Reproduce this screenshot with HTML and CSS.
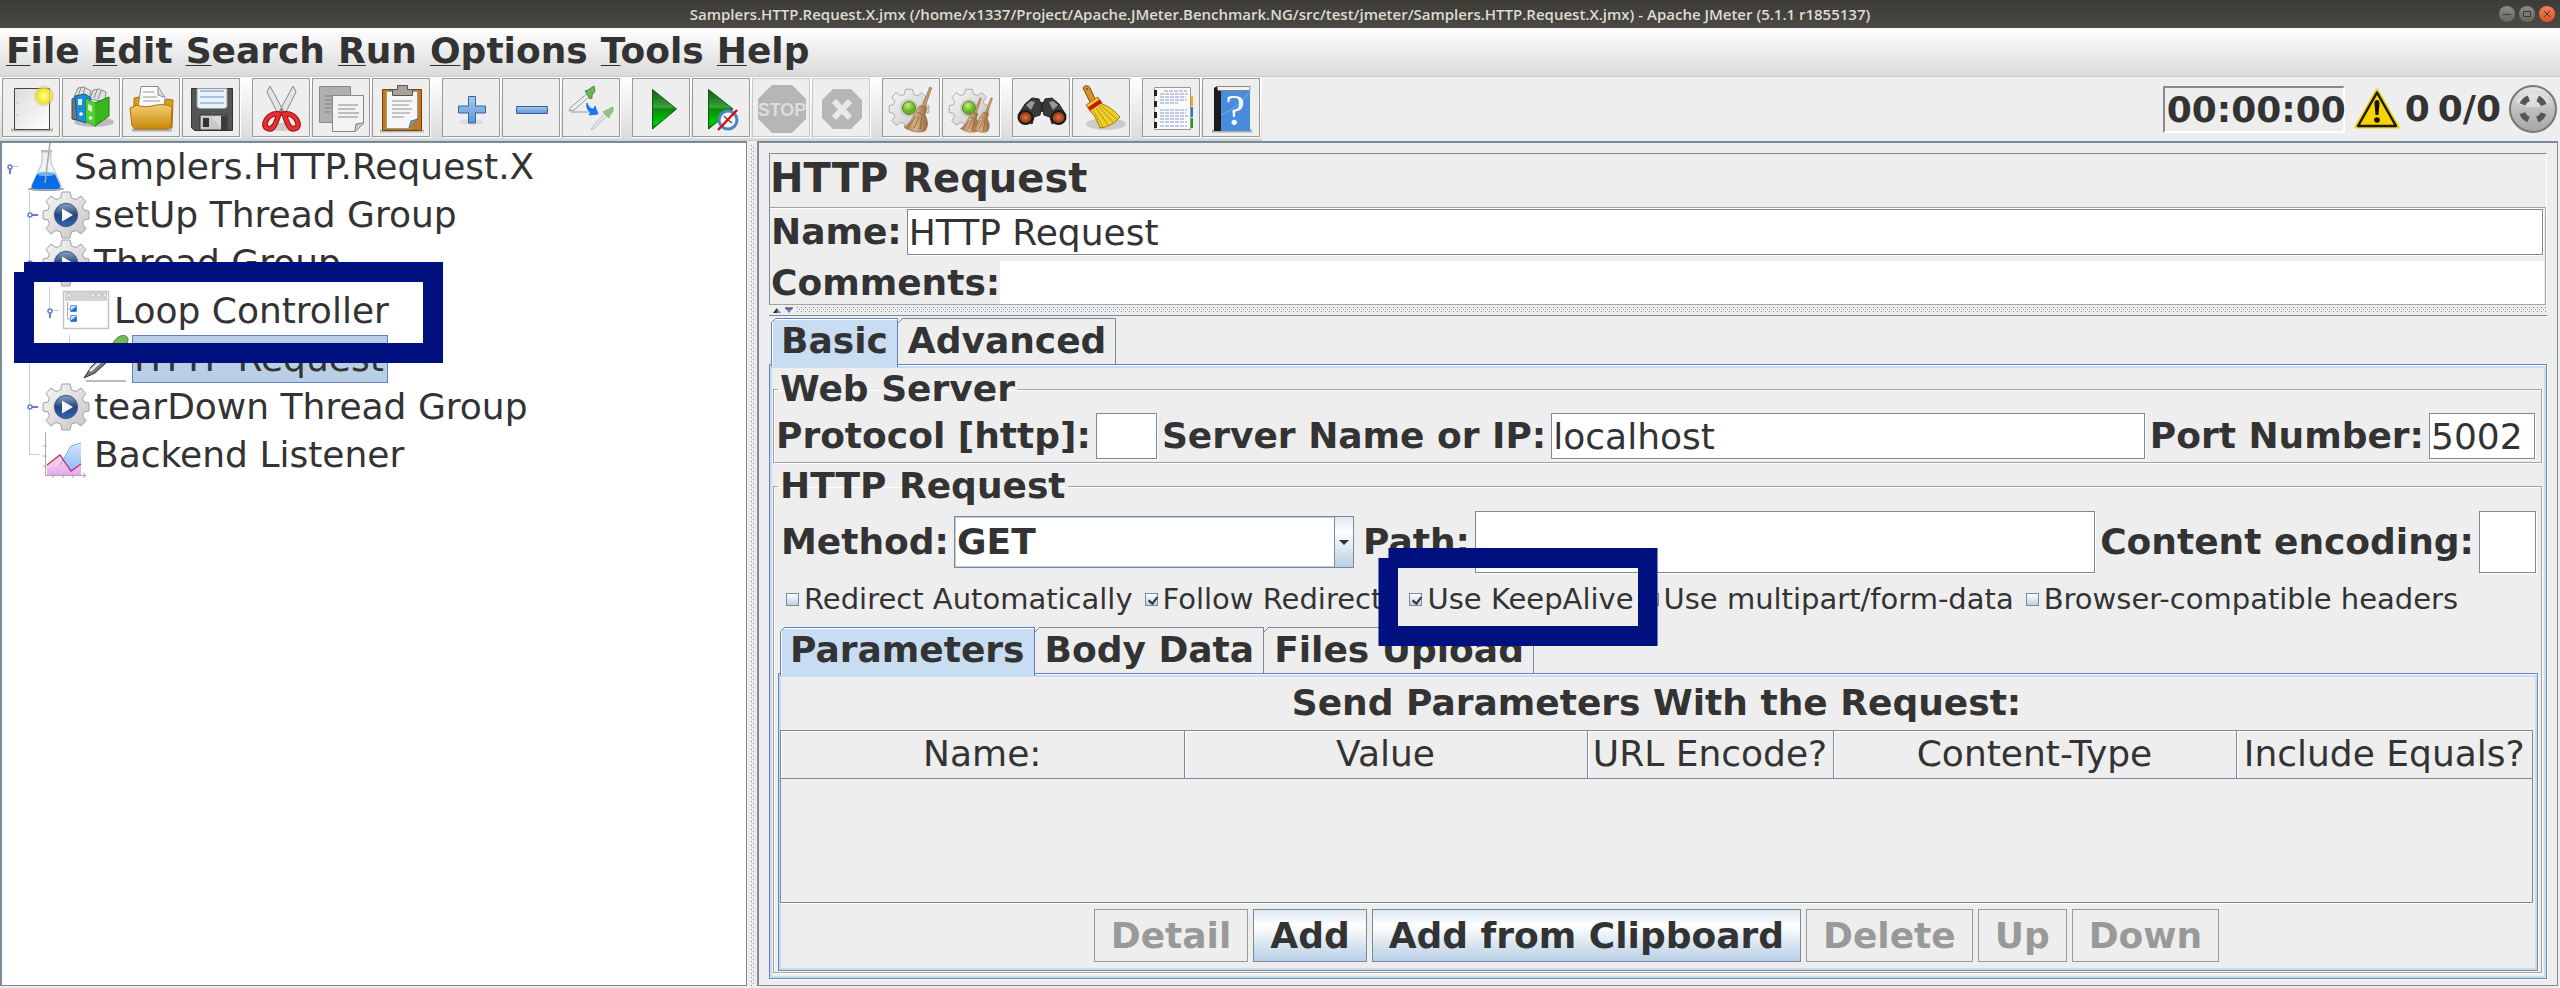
FILE: index.html
```html
<!DOCTYPE html>
<html lang="en">
<head>
<meta charset="utf-8">
<title>Samplers.HTTP.Request.X.jmx - Apache JMeter</title>
<link rel="stylesheet" href="styles.css">
</head>
<body>
<svg class="defs" aria-hidden="true">
  <defs>
    <linearGradient id="g-metal" x1="0" y1="0" x2="1" y2="1"><stop offset="0" stop-color="#f8f8f8"/><stop offset="1" stop-color="#c4c4c4"/></linearGradient>
    <linearGradient id="g-paper" x1="0" y1="0" x2="1" y2="1"><stop offset="0" stop-color="#dcdcdc"/><stop offset="1" stop-color="#ffffff"/></linearGradient>
    <radialGradient id="g-glow"><stop offset="0" stop-color="#ffffd0"/><stop offset=".35" stop-color="#fff23a"/><stop offset=".7" stop-color="#e8dc30" stop-opacity=".8"/><stop offset="1" stop-color="#a8a040" stop-opacity="0"/></radialGradient>
    <linearGradient id="g-folder" x1="0" y1="0" x2="0" y2="1"><stop offset="0" stop-color="#f2cd72"/><stop offset="1" stop-color="#c98a08"/></linearGradient>
    <linearGradient id="g-green" x1="0" y1="0" x2="0" y2="1"><stop offset="0" stop-color="#0d5c12"/><stop offset=".45" stop-color="#3ba03c"/><stop offset=".5" stop-color="#0a8a0c"/><stop offset=".85" stop-color="#00c800"/><stop offset="1" stop-color="#067a08"/></linearGradient>
    <linearGradient id="g-blue" x1="0" y1="0" x2="0" y2="1"><stop offset="0" stop-color="#a9c8ea"/><stop offset="1" stop-color="#5e94d2"/></linearGradient>
    <linearGradient id="g-play" x1="0" y1="0" x2="0" y2="1"><stop offset="0" stop-color="#8ea4c8"/><stop offset=".5" stop-color="#27457c"/><stop offset="1" stop-color="#2f66b8"/></linearGradient>
    <radialGradient id="g-led" cx=".4" cy=".3"><stop offset="0" stop-color="#c4f07a"/><stop offset="1" stop-color="#5eb41a"/></radialGradient>
    <radialGradient id="g-lens"><stop offset="0" stop-color="#e8703a"/><stop offset="1" stop-color="#7a2c10"/></radialGradient>
    <linearGradient id="g-broom" x1="0" y1="0" x2="1" y2="0"><stop offset="0" stop-color="#a97c50"/><stop offset=".5" stop-color="#d9b088"/><stop offset="1" stop-color="#94683c"/></linearGradient>
    <linearGradient id="g-knob" x1="0" y1="0" x2="0" y2="1"><stop offset="0" stop-color="#e8e8e8"/><stop offset=".5" stop-color="#c0c0c0"/><stop offset="1" stop-color="#a4a4a4"/></linearGradient>
    <linearGradient id="g-sky" x1="0" y1="0" x2="0" y2="1"><stop offset="0" stop-color="#d2e4fc"/><stop offset="1" stop-color="#80b4f8"/></linearGradient>
    <linearGradient id="g-rose" x1="0" y1="0" x2="0" y2="1"><stop offset="0" stop-color="#fbd8d8"/><stop offset="1" stop-color="#f0a8f4"/></linearGradient>
    <path id="gear-shape" d="M-4-23H4L5.500-17 10-15.500 15-19 20-13.500 16.500-9 18-5 23-4V4L18 5 16.500 9 20 13.500 15 19 10 15.500 5.500 17 4 23H-4L-5.500 17-10 15.500-15 19-20 13.500-16.500 9-18 5-23 4V-4L-18-5-16.500-9-20-13.500-15-19-10-15.500-5.500-17Z" fill="url(#g-metal)" stroke="#a2a2a2"/>
    <symbol id="gear-play" viewBox="0 0 48 48"><g transform="translate(24 24)"><use href="#gear-shape"/><circle r="12.500" fill="#c4c8d0"/><circle r="11.500" fill="url(#g-play)" stroke="#3c5078"/><path d="M-4-6.500L7 0-4 6.500Z" fill="#f4f6fa"/></g></symbol>
    <symbol id="broom" viewBox="0 0 30 48"><path d="M27 1l2 1-7 20-3-1Z" fill="#c89a6c" stroke="#8c6236" stroke-width=".6"/><path d="M17 20l7 2-2 7c3 6 4 12 0 17-5 2-14 1-21-4 5-3 9-9 11-15Z" fill="url(#g-broom)" stroke="#8c6236" stroke-width=".7"/><path d="M14 27l8 3M13 31L5 42M16 31l-5 12M19 31l-2 14" stroke="#7c5530" fill="none" stroke-width=".8"/></symbol>
    <symbol id="h-closed" viewBox="0 0 20 48"><path d="M8 24h8" stroke="#6382bf" stroke-width="2"/><circle cx="8" cy="24" r="2" fill="#fff" stroke="#6382bf" stroke-width="1.500"/></symbol>
    <symbol id="h-open" viewBox="0 0 20 48"><path d="M8 23.500h9" stroke="#b8cfe5"/><path d="M8 24v7" stroke="#6382bf" stroke-width="2"/><circle cx="8" cy="24" r="2" fill="#fff" stroke="#6382bf" stroke-width="1.500"/></symbol>
  </defs>
</svg>

<header class="titlebar">
  <h1 class="titlebar-text">Samplers.HTTP.Request.X.jmx (/home/x1337/Project/Apache.JMeter.Benchmark.NG/src/test/jmeter/Samplers.HTTP.Request.X.jmx) - Apache JMeter (5.1.1 r1855137)</h1>
  <div class="window-buttons">
    <button class="win" aria-label="Minimize"><svg viewBox="0 0 16 16"><path d="M4 8.500h8"/></svg></button>
    <button class="win" aria-label="Maximize"><svg viewBox="0 0 16 16"><path d="M4.500 5.500h7v5h-7Z"/></svg></button>
    <button class="win win-close" aria-label="Close"><svg viewBox="0 0 16 16"><path d="M5 5l6 6M11 5l-6 6"/></svg></button>
  </div>
</header>

<nav class="menubar">
  <button class="menu"><u>F</u>ile</button>
  <button class="menu"><u>E</u>dit</button>
  <button class="menu"><u>S</u>earch</button>
  <button class="menu"><u>R</u>un</button>
  <button class="menu"><u>O</u>ptions</button>
  <button class="menu"><u>T</u>ools</button>
  <button class="menu"><u>H</u>elp</button>
</nav>

<div class="toolbar">
  <div class="tools">
    <div class="tool-group">
      <button class="tool" aria-label="New"><svg viewBox="1 1 56 56"><path d="M9 51h42" stroke="#b8b8b8" stroke-width="3"/><path d="M12.500 9.500h35v41h-35Z" fill="url(#g-paper)" stroke="#444"/><path d="M15 24h1M15 36h1" stroke="#888"/><ellipse cx="42" cy="17" rx="10.500" ry="11" fill="url(#g-glow)"/></svg></button>
      <button class="tool" aria-label="Templates"><svg viewBox="1 1 56 56"><ellipse cx="32" cy="43" rx="20" ry="5" fill="#999" opacity=".6"/><path d="M10 20l10-5v27l-10-2Z" fill="#73777c" stroke="#44484c"/><path d="M12 18l4-9 6-1 7 4-4 14ZM28 20l3-9 6-1 7 3-1 10Z" fill="#e0e0e0" stroke="#888"/><path d="M16 17l3-8M20 18l3-9M32 19l3-8M36 20l3-8" stroke="#888"/><path d="M13 17l10-2 6 4-5 25-9-3Z" fill="#1c8cd8" stroke="#0b5c96"/><path d="M24 20l9 4 14-6v19l-14 10-9-5Z" fill="#38b81c" stroke="#1f7a0e"/><path d="M24 20l9 4v23l-9-5Z" fill="#4cd42c"/><path d="M26 25l4 2v6l-4-2ZM16 20l4 0v6h-4Z" fill="#e4f4dc"/><circle cx="28.500" cy="39" r="1.800" fill="#fff"/><circle cx="19" cy="35" r="1.800" fill="#fff"/></svg></button>
      <button class="tool" aria-label="Open"><svg viewBox="1 1 56 56"><path d="M10 51h40" stroke="#888" stroke-width="3" opacity=".6"/><path d="M12 19l5-1 2 4h24l2-2 6 1-1 28H12Z" fill="#dc9c14" stroke="#a8720a"/><path d="M19 7.500h17l7 11-1 13-26-2Z" fill="#fafafa" stroke="#8a8a8a"/><path d="M36 8v8l6 2" fill="#ddd" stroke="#8a8a8a"/><path d="M21 13h11M21 18h14M21 22h17" stroke="#999"/><path d="M8 29l7-3c5 2 10 2 15 1 7-2 14-2 20 1l-1 19-3 3H13l-3-3Z" fill="url(#g-folder)" stroke="#a8720a"/></svg></button>
      <button class="tool" aria-label="Save"><svg viewBox="1 1 56 56"><path d="M9.500 9.500h41v42h-38l-3-3Z" fill="#555" stroke="#333"/><path d="M15 9.500h30v18l-2 2H17l-2-2Z" fill="#eaf2fc" stroke="#999"/><path d="M18 12h24M18 18h24M18 24h24" stroke="#8fb0d8" stroke-width="1.500"/><path d="M18 36h27v15H18Z" fill="#c8c8c8" stroke="#333"/><path d="M21 39h6v9h-6Z" fill="#333"/><path d="M39 36.500h6V51h-6Z" fill="#3c3c3c"/><path d="M29 38l10 10V37Z" fill="#e0e0e0" opacity=".7"/></svg></button>
    </div>
    <div class="tool-group">
      <button class="tool" aria-label="Cut"><svg viewBox="1 1 56 56"><ellipse cx="30" cy="48" rx="16" ry="4" fill="#ccc"/><path d="M18 7l-3 6 12 24 5-4ZM41 7l3 6-12 24-5-4Z" fill="#e4e4e4" stroke="#888"/><circle cx="29.500" cy="31" r="1.500" fill="#888"/><path d="M27 35c-6-1-12 2-14 9-1 6 6 8 9 3 3-4 3-8 5-12ZM32 35c6-1 12 2 14 9 1 6-6 8-9 3-3-4-3-8-5-12Z" fill="none" stroke="#9c0c0c" stroke-width="5.500"/><path d="M27 35c-6-1-12 2-14 9-1 6 6 8 9 3 3-4 3-8 5-12ZM32 35c6-1 12 2 14 9 1 6-6 8-9 3-3-4-3-8-5-12Z" fill="none" stroke="#e43030" stroke-width="3.500"/></svg></button>
      <button class="tool" aria-label="Copy"><svg viewBox="1 1 56 56"><path d="M7.500 7.500h31v36h-31Z" fill="#b0b0b0" stroke="#8a8a8a"/><path d="M13 17h8M13 21h7M13 25h7M13 29h7M13 33h5" stroke="#8e8e8e" stroke-width="1.500"/><path d="M20.500 16.500h31v28l-8 8h-23Z" fill="#f4f4f4" stroke="#888"/><path d="M43 52l1-7 7-1" fill="#ccc" stroke="#777"/><path d="M26 26h20M26 30h17M26 34h21M26 38h20" stroke="#aaa" stroke-width="1.500"/></svg></button>
      <button class="tool" aria-label="Paste"><svg viewBox="1 1 56 56"><path d="M8 52h44" stroke="#bbb" stroke-width="3"/><path d="M10.500 10.500h39v41h-39Z" fill="#c07a1c" stroke="#6e430a"/><path d="M14.500 12.500h31v29l-8 8h-23Z" fill="#f6f6f6" stroke="#999"/><path d="M37 49l2-7 7-2Z" fill="#999" stroke="#666"/><path d="M20 22h20M20 26h17M20 30h20M20 34h18M20 38h12" stroke="#b4b4b4" stroke-width="1.500"/><path d="M20.500 10.500h5V6.500h10v4h5v6h-20Z" fill="#a4a49c" stroke="#55554e"/></svg></button>
    </div>
    <div class="tool-group">
      <button class="tool" aria-label="Expand All"><svg viewBox="1 1 56 56"><ellipse cx="29" cy="43" rx="12" ry="3" fill="#ddd"/><path d="M26.500 17.500h7v9.500h10v7h-10v10h-7v-10h-10v-7h10Z" fill="url(#g-blue)" stroke="#3465a4"/></svg></button>
      <button class="tool" aria-label="Collapse All"><svg viewBox="1 1 56 56"><path d="M14.500 27.500h31v7h-31Z" fill="url(#g-blue)" stroke="#3465a4"/></svg></button>
      <button class="tool" aria-label="Toggle"><svg viewBox="1 1 56 56"><path d="M9 33h26" stroke="#999"/><path d="M26 14L9 28l-2 4 5-1 16-14Z" fill="#f0f0f0" stroke="#999"/><path d="M23 12l3-1 6-4 1 5-3 4 0 3-2 1Z" fill="#6eb456" stroke="#4a8a38"/><path d="M25 24c2 5 4 6 7 6l1-3 3 8-9 1 2-3c-3-1-5-4-4-9Z" fill="#1b74f0" stroke="#1b74f0"/><g opacity=".6"><path d="M43 34L30 48l-1 3 4-2 13-13Z" fill="#ddd" stroke="#aaa"/><path d="M41 33l4-2 6-3v4l-3 4-1 3Z" fill="#5aa646" stroke="#4a8a38"/></g></svg></button>
    </div>
    <div class="tool-group">
      <button class="tool" aria-label="Start"><svg viewBox="1 1 56 56"><path d="M20.500 10.500L44.500 30 20.500 50Z" fill="url(#g-green)" stroke="#0c5a10"/></svg></button>
      <button class="tool" aria-label="Start no pauses"><svg viewBox="1 1 56 56"><path d="M16.500 10.500L41 30 16.500 50Z" fill="url(#g-green)" stroke="#0c5a10"/><circle cx="36" cy="41" r="9" fill="#f2f6fc" stroke="#4c84c4" stroke-width="3"/><path d="M36 41l-4-4M36 41l4 3" stroke="#555" stroke-width="1.500"/><path d="M26 51L45 31" stroke="#d40c18" stroke-width="2.500"/></svg></button>
      <button class="tool" disabled aria-label="Stop"><svg viewBox="1 1 56 56"><path d="M20 6h20l14 14v20L40 54H20L6 40V20Z" fill="#b6b6b6"/><text x="30" y="37" class="stop-text">STOP</text></svg></button>
      <button class="tool" disabled aria-label="Shutdown"><svg viewBox="1 1 56 56"><path d="M21 10h18l11 11v18L39 50H21L10 39V21Z" fill="#b6b6b6"/><path d="M22 22l16 17M38 22L22 39" stroke="#e8e8e8" stroke-width="6"/></svg></button>
    </div>
    <div class="tool-group">
      <button class="tool" aria-label="Clear"><svg viewBox="1 1 56 56"><use href="#gear-shape" transform="translate(27 30) scale(.86)"/><circle cx="27" cy="29" r="9" fill="#c8c8c8"/><circle cx="27" cy="29" r="6.500" fill="url(#g-led)" stroke="#5a8a30"/><use href="#broom" x="21" y="7" width="30" height="47"/></svg></button>
      <button class="tool" aria-label="Clear All"><svg viewBox="1 1 56 56"><use href="#gear-shape" transform="translate(27 30) scale(.86)"/><circle cx="27" cy="29" r="9" fill="#c8c8c8"/><circle cx="27" cy="29" r="6.500" fill="url(#g-led)" stroke="#5a8a30"/><use href="#broom" x="17" y="18" width="24" height="36"/><use href="#broom" x="28" y="18" width="24" height="36"/></svg></button>
    </div>
    <div class="tool-group">
      <button class="tool" aria-label="Search"><svg viewBox="1 1 56 56"><path d="M25 23h11v10H25Z" fill="#444"/><path d="M6 36L13 25l7-6 7 1 3 7-2 9-6 2-2 7ZM54 36l-7-11-7-6-7 1-3 7 2 9 6 2 2 7Z" fill="#3a3a3c" stroke="#222"/><path d="M14 26l5-4 4 1-4 8ZM46 26l-5-4-4 1 4 8Z" fill="#9a9a9e"/><ellipse cx="13.500" cy="38.500" rx="7" ry="6.500" fill="url(#g-lens)" stroke="#1a1a1a" stroke-width="2"/><ellipse cx="46.500" cy="38.500" rx="7" ry="6.500" fill="url(#g-lens)" stroke="#1a1a1a" stroke-width="2"/></svg></button>
      <button class="tool" aria-label="Reset Search"><svg viewBox="1 1 56 56"><ellipse cx="34" cy="45" rx="20" ry="6" fill="#ccc"/><path d="M11 9c1-3 6-3 7 0l6 13-5 3Z" fill="#d8922c" stroke="#7c4a08"/><circle cx="15" cy="10" r="1" fill="#7c4a08"/><path d="M14 26l12-8 2 6c8 3 14 7 20 14-5 6-12 10-20 11-3-7-5-13-10-17Z" fill="#f0d028" stroke="#9a7a08"/><path d="M21 31l10 17M24 29l12 17M26 27l15 16M28 26l17 14" stroke="#b89410" fill="none"/><path d="M17 30l12-8" stroke="#c81818" stroke-width="4"/></svg></button>
    </div>
    <div class="tool-group">
      <button class="tool" aria-label="Function Helper"><svg viewBox="1 1 56 56"><path d="M47 17h4v10h-4Z" fill="#f0b010"/><path d="M47 28h4v10h-4Z" fill="#2878d8"/><path d="M47 39h4v10h-4Z" fill="#18a018"/><path d="M12.500 8.500h36v42h-36Z" fill="#fbfbfb" stroke="#999"/><path d="M22 12h23M18 15h28M18 18h26M18 21h27M18 24h18M18 31h27M18 34h26M18 37h28M18 40h25M18 43h27M18 47h27" stroke="#8498c8" stroke-dasharray="4 1"/><path d="M12 14h3M12 25h3M12 36h3M12 46h3" stroke="#222" stroke-width="6"/></svg></button>
      <button class="tool" aria-label="Help"><svg viewBox="1 1 56 56"><path d="M10 52h40" stroke="#aaa" stroke-width="3"/><path d="M12 9l3-2h33v43l-3 2H12Z" fill="#1c1c1e"/><path d="M19 11h29v41H19Z" fill="#4a8cdc"/><path d="M15 7.500h33v4H16Z" fill="#f2f2f2" stroke="#888"/><path d="M19 36c10-4 20-12 28-22" stroke="#7cb0ec" fill="none"/><text x="33" y="46" class="help-text">?</text></svg></button>
    </div>
  </div>
  <div class="status">
    <output class="timer">00:00:00</output>
    <button class="warn" aria-label="Log errors"><svg viewBox="0 0 46 42"><path d="M23 2L44 39H2Z" fill="#fad200" stroke="#f0d400" stroke-width="3" stroke-linejoin="round"/><path d="M23 4.500L42 38H4Z" fill="#fad200" stroke="#1c1a10" stroke-width="2.500" stroke-linejoin="round"/><path d="M20.500 15c0-4 5-4 5 0l-1 12h-3Z" fill="#111"/><circle cx="23" cy="32" r="2.800" fill="#111"/></svg></button>
    <span class="errors">0</span>
    <span class="threads">0/0</span>
    <svg class="knob" viewBox="0 0 48 48"><circle cx="24" cy="24" r="23" fill="url(#g-knob)" stroke="#777" stroke-width="2"/><path d="M7 17C12 6 36 6 41 17 34 24 14 24 7 17Z" fill="#eee" opacity=".5"/><circle cx="24" cy="24" r="11.500" fill="none" stroke="#555" stroke-width="6" stroke-dasharray="9 9.060" stroke-dashoffset="-4.500"/></svg>
  </div>
</div>

<main class="workspace">
  <aside class="tree-pane">
    <ul class="tree">
      <li>
        <div class="node"><svg class="handle"><use href="#h-open"/></svg><svg class="icon" viewBox="0 0 48 48"><ellipse cx="24" cy="46" rx="18" ry="2" fill="#999"/><path d="M20 9h9v11l10 22c1 3-2 4-4 4H13c-3 0-4-2-3-4l10-22Z" fill="#eef2f4" stroke="#b4bcc0"/><path d="M15 31h18l5 11c1 3-1 4-3 4H13c-3 0-4-2-3-4Z" fill="#0a6ce8"/><ellipse cx="24" cy="31" rx="9" ry="2" fill="#6eb0f8"/><path d="M28 0l-5 40" stroke="#a4a8ac" stroke-width="1.500"/><path d="M19 8h11" stroke="#b4bcc0" stroke-width="2"/></svg><span class="label">Samplers.HTTP.Request.X</span></div>
        <ul>
          <li><div class="node"><svg class="handle"><use href="#h-closed"/></svg><svg class="icon"><use href="#gear-play"/></svg><span class="label">setUp Thread Group</span></div></li>
          <li>
            <div class="node"><svg class="handle"><use href="#h-open"/></svg><svg class="icon"><use href="#gear-play"/></svg><span class="label">Thread Group</span></div>
            <ul>
              <li>
                <div class="node"><svg class="handle"><use href="#h-open"/></svg><svg class="icon" viewBox="0 0 48 48"><path d="M1.500 4.500h45v37h-45Z" fill="#fff" stroke="#c4c4c4" stroke-width="1.500"/><path d="M3 5h42v9H3Z" fill="#d4d4d4"/><path d="M5 7h4l-2 4ZM29 7h4l-2 4ZM35 7h4l-2 4ZM41 7h4l-2 4Z" fill="#fff" stroke="#aaa" stroke-width=".5"/><path d="M5.500 15v17h4M5.500 22h4" fill="none" stroke="#aaa"/><path d="M8.500 18.500h6v6h-6ZM8.500 28.500h6v6h-6Z" fill="#cfe4fc" stroke="#6a9ad8"/><path d="M9 24l5-4v4ZM9 34l5-4v4Z" fill="#1070e8" stroke="#1070e8"/></svg><span class="label">Loop Controller</span><span class="mark mark-tree"></span></div>
                <ul>
                  <li><div class="node"><svg class="handle"></svg><svg class="icon" viewBox="0 0 48 48"><path d="M4 46h40" stroke="#bbb" stroke-width="2"/><path d="M32 11L9 32 2 43l11-5 24-22Z" fill="#777" stroke="#333"/><path d="M8 36L32 14" stroke="#e4e4e4" stroke-width="3"/><path d="M31 8c4-8 12-9 14-6 3 3-1 10-7 14Z" fill="#74bc50" stroke="#4a8a38"/></svg><span class="label selected">HTTP Request</span></div></li>
                </ul>
              </li>
            </ul>
          </li>
          <li><div class="node"><svg class="handle"><use href="#h-closed"/></svg><svg class="icon"><use href="#gear-play"/></svg><span class="label">tearDown Thread Group</span></div></li>
          <li><div class="node"><svg class="handle"><path d="M8 23.500h10" stroke="#b8cfe5"/></svg><svg class="icon" viewBox="0 0 48 48"><path d="M5 38l13-4 11-18 10-3v31H5Z" fill="url(#g-sky)"/><path d="M5 34l13-10 11 16 10-7v11H5Z" fill="url(#g-rose)" opacity=".9"/><path d="M18 34l11-19 10-3" fill="none" stroke="#6ca4f0"/><path d="M5 34l13-10 11 16 10-7" fill="none" stroke="#b8307c" stroke-width="1.300"/><path d="M3.500 2v42.500H43M1 15h4M1 25h4M1 35h4M11 43v4M21 43v4M31 43v4M3.500 1v4M41 42l3 2.500-3 2" fill="none" stroke="#aaa"/></svg><span class="label">Backend Listener</span></div></li>
        </ul>
      </li>
    </ul>
  </aside>
  <div class="splitter splitter-v"></div>
  <section class="editor">
    <div class="head">
      <h2 class="head-title">HTTP Request</h2>
      <div class="head-fields">
        <div class="row name-row"><label for="name">Name:</label><input id="name" class="field grow" value="HTTP Request"></div>
        <div class="row comment-row"><label for="comments">Comments:</label><input id="comments" class="plain-field grow"></div>
      </div>
    </div>
    <div class="splitter splitter-h"><svg class="arrows" viewBox="0 0 24 8"><path d="M1 6l4-5 4 5Z" fill="#6382bf"/><path d="M1 6l4-5v5Z" fill="#333"/><path d="M13 1h8l-4 5Z" fill="#6382bf"/><path d="M13 1h8" stroke="#333"/></svg></div>
    <div class="detail">
      <div class="tabs" role="tablist">
        <button class="tab active" role="tab" aria-selected="true">Basic</button><button class="tab" role="tab">Advanced</button>
      </div>
      <div class="tab-body outer-body">
        <fieldset class="group">
          <legend>Web Server</legend>
          <div class="row server-row">
            <label for="protocol">Protocol [http]:</label><input id="protocol" class="field w-protocol">
            <label for="server">Server Name or IP:</label><input id="server" class="field grow" value="localhost">
            <label for="port">Port Number:</label><input id="port" class="field w-port" value="5002">
          </div>
        </fieldset>
        <fieldset class="group request">
          <legend>HTTP Request</legend>
          <div class="row method-row">
            <label for="method">Method:</label>
            <span class="combo"><select id="method"><option>GET</option><option>POST</option></select><span class="combo-arrow"></span></span>
            <label for="path">Path:</label><input id="path" class="field tall grow">
            <label for="encoding">Content encoding:</label><input id="encoding" class="field tall w-encoding">
          </div>
          <div class="checks">
            <label class="check"><input type="checkbox">Redirect Automatically</label>
            <label class="check"><input type="checkbox" checked>Follow Redirects</label>
            <label class="check"><input type="checkbox" checked>Use KeepAlive<span class="mark mark-check"></span></label>
            <label class="check"><input type="checkbox">Use multipart/form-data</label>
            <label class="check"><input type="checkbox">Browser-compatible headers</label>
          </div>
          <div class="params">
            <div class="tabs" role="tablist">
              <button class="tab active" role="tab" aria-selected="true">Parameters</button><button class="tab" role="tab">Body Data</button><button class="tab" role="tab">Files Upload</button>
            </div>
            <div class="tab-body inner-body">
              <h3 class="params-title">Send Parameters With the Request:</h3>
              <div class="table-area">
                <table class="table">
                  <colgroup><col><col><col class="c-encode"><col><col class="c-equals"></colgroup>
                  <thead><tr><th>Name:</th><th>Value</th><th>URL Encode?</th><th>Content-Type</th><th>Include Equals?</th></tr></thead>
                </table>
              </div>
              <div class="actions">
                <button class="btn" disabled>Detail</button>
                <button class="btn">Add</button>
                <button class="btn">Add from Clipboard</button>
                <button class="btn" disabled>Delete</button>
                <button class="btn" disabled>Up</button>
                <button class="btn" disabled>Down</button>
              </div>
            </div>
          </div>
        </fieldset>
      </div>
    </div>
  </section>
</main>
</body>
</html>
```

FILE: styles.css
```css
:root {
  --panel: #eeeeee;
  --text: #333333;
  --line: #7a8a99;
  --etch: #a3a3a3;
  --blue: #6382bf;
  --soft-blue: #c8ddf2;
  --mark: #00117f;
  --dots: conic-gradient(at 1px 1px, transparent 75%, #7a8a99 0);
}

* { box-sizing: border-box; }

body {
  margin: 0;
  min-height: 100vh;
  display: flex;
  flex-direction: column;
  background: var(--panel);
  color: var(--text);
  font: bold 36px/42px "DejaVu Sans", sans-serif;
}

button, input, select {
  font: inherit;
  color: inherit;
  margin: 0;
  padding: 0;
  border: 0;
  background: none;
  border-radius: 0;
}

h1, h2, h3, ul, fieldset { margin: 0; padding: 0; font: inherit; }
svg { display: block; }
.defs { position: absolute; width: 0; height: 0; }

/* Window frame */
.titlebar {
  display: flex;
  align-items: center;
  height: 28px;
  padding: 0 5px 0 61px;
  background: linear-gradient(#3c3b37, #4b4943);
}
.titlebar-text {
  flex: 1;
  text-align: center;
  color: #dfdbd2;
  font: 600 15px/20px "Open Sans", sans-serif;
  white-space: nowrap;
}
.window-buttons { display: flex; gap: 4px; }
.win {
  width: 16px;
  height: 16px;
  border-radius: 50%;
  background: linear-gradient(#8c8a84, #66645e);
}
.win svg { width: 16px; height: 16px; fill: none; stroke: #3c3b37; stroke-width: 1; }
.win-close { background: linear-gradient(#f48060, #e2501e); }

.menubar {
  display: flex;
  gap: 13px;
  height: 49px;
  padding: 1px 6px 4px;
  background: linear-gradient(#ffffff, #dadada);
  border-bottom: 1px solid #cccccc;
}
.menu { line-height: 42px; }
.menu u {
  text-decoration-thickness: 1px;
  text-underline-offset: 2px;
  text-decoration-skip-ink: none;
}

/* Toolbar */
.toolbar {
  display: flex;
  justify-content: space-between;
  height: 64px;
}
.tools {
  display: flex;
  gap: 12px;
  padding: 1px 2px 0;
  background: linear-gradient(#ffffff, #dadada);
  border-bottom: 1px solid #cccccc;
}
.tool-group { display: flex; gap: 2px; }
.tool {
  width: 58px;
  height: 59px;
  border: 1px solid #999999;
  background: var(--panel);
  box-shadow: 1px 1px 0 #ffffff;
}
.tool:disabled { border-color: #c8c8c8; }
.tool svg { width: 56px; height: 56px; }
.stop-text { font: bold 18px "Liberation Sans", sans-serif; fill: #dddddd; text-anchor: middle; }
.help-text { font: 44px "Liberation Serif", serif; fill: #ffffff; text-anchor: middle; }

.status { display: flex; align-items: center; padding: 0 3px 0 0; }
.timer {
  width: 182px;
  height: 47px;
  padding: 0 2px;
  line-height: 43px;
  text-align: center;
  border: 2px solid #ffffff;
  border-top-color: #8a8a8a;
  border-left-color: #8a8a8a;
}
.warn { margin: 0 5px 0 9px; }
.warn svg { width: 46px; height: 42px; }
.threads { margin: 0 8px; }
.knob { width: 48px; height: 48px; }

/* Split panes */
.workspace { flex: 1; display: flex; padding: 0 2px 2px 0; }
.tree-pane {
  flex: 0 0 747px;
  background: #ffffff;
  border: 2px solid var(--line);
  border-right-width: 1px;
  border-bottom-width: 1px;
}
.splitter {
  background-image: var(--dots), var(--dots);
  background-size: 4px 4px;
}
.splitter-v { flex: 0 0 4px; margin: 4px 2px 0 4px; background-position: 0 0, 2px 2px; }
.splitter-h { height: 6px; margin: 2px 0; background-position: 0 0, 2px 2px; }
.arrows { width: 27px; height: 8px; background: var(--panel); padding-left: 3px; }

/* Test plan tree */
.tree, .tree ul { list-style: none; }
.tree ul { padding-left: 20px; }
.tree { font-weight: normal; }
.tree li { position: relative; }
.tree ul > li::before {
  content: "";
  position: absolute;
  left: 7px;
  top: 0;
  bottom: 0;
  border-left: 1px solid #b8cfe5;
}
.tree ul > li:last-child::before { bottom: auto; height: 24px; }
.node { position: relative; display: flex; align-items: center; height: 48px; }
.handle { width: 20px; height: 48px; flex: none; }
.icon { width: 48px; height: 48px; flex: none; }
.label {
  margin-left: 2px;
  padding: 2px 3px 2px 1px;
  border: 1px solid transparent;
  white-space: nowrap;
}
.label.selected { background: #b8cfe5; border-color: var(--blue); }

/* Highlight frames laid over the controls */
.mark {
  position: absolute;
  z-index: 2;
  border: 20px solid var(--mark);
  clip-path: polygon(10px 0, 100% 0, 100% 100%, 0 100%, 0 10px, 10px 10px);
  pointer-events: none;
}
.mark-tree { left: -28px; top: -25px; width: 429px; height: 101px; }
.mark-check { left: -31px; right: -24px; top: -35px; bottom: -30px; }

/* Editor */
.editor {
  flex: 1;
  display: flex;
  flex-direction: column;
  min-width: 0;
  padding: 10px 10px 6px;
  border: 1px solid var(--line);
  border-width: 2px 1px 1px 2px;
}
.head { border: 1px solid #ffffff; border-top-color: var(--line); border-left-color: var(--line); border-bottom: 0; }
.head-title { font-size: 40px; line-height: 48px; padding-bottom: 5px; }
.head-fields {
  border: 1px solid var(--etch);
  border-left: 0;
  box-shadow: inset 0 1px 0 #ffffff;
  padding: 1px 1px 0;
}
.row { display: flex; align-items: center; gap: 5px; white-space: nowrap; }
.name-row { padding-right: 1px; }
.comment-row { gap: 0; padding-top: 6px; }
.field, .plain-field { min-width: 0; font-weight: normal; background: #ffffff; }
.field {
  height: 46px;
  padding: 0 1px;
  border: 1px solid var(--line);
  box-shadow: 1px 1px 0 #ffffff;
}
.plain-field { height: 43px; }
.grow { flex: 1; }
.tall { height: 62px; }
.w-protocol { width: 61px; }
.w-port { width: 106px; }
.w-encoding { width: 57px; }

.detail {
  flex: 1;
  display: flex;
  flex-direction: column;
  border-top: 1px solid var(--line);
  padding-top: 2px;
}
.tabs { display: flex; padding-left: 2px; }
.tab {
  position: relative;
  height: 46px;
  padding: 0 9px 2px;
  border: 1px solid var(--line);
  border-bottom: 0;
  border-left-color: transparent;
}
.tab::before {
  content: "";
  position: absolute;
  left: -1px;
  top: -1px;
  width: 6px;
  height: 6px;
  background: linear-gradient(135deg, var(--panel) 0 3px, var(--line) 3px 4px, transparent 4px);
}
.tab.active {
  z-index: 1;
  margin-bottom: -3px;
  height: 49px;
  padding-bottom: 5px;
  background: var(--soft-blue);
  border-color: var(--blue);
  box-shadow: inset 1px 1px 0 #ffffff;
}
.tab-body {
  flex: 1;
  display: flex;
  flex-direction: column;
  border: 1px solid var(--line);
  border-top-color: var(--blue);
  border-left-color: var(--blue);
  box-shadow: inset 0 1px 0 #ffffff, inset 0 0 0 2px var(--soft-blue), inset 0 3px 0 var(--soft-blue), 1px 1px 0 #ffffff;
}
.outer-body { padding: 3px 4px 5px 3px; gap: 2px; }

.group {
  min-width: 0;
  border: 1px solid var(--etch);
  box-shadow: inset 1px 1px 0 #ffffff, 1px 1px 0 #ffffff;
}
.group legend { margin-left: 4px; padding: 0 2px; }
.server-row { padding: 3px 6px 3px 2px; }
.request { flex: 1; display: flex; flex-direction: column; }
.method-row { padding: 4px 5px 0 7px; }
.combo { position: relative; display: flex; width: 400px; height: 52px; margin-right: 4px; }
.combo select {
  flex: 1;
  appearance: none;
  padding: 0 22px 0 2px;
  background: #ffffff;
  border: 1px solid var(--line);
  box-shadow: inset 0 0 0 1px #b8cfe5;
}
.combo-arrow {
  position: absolute;
  right: 0;
  top: 0;
  bottom: 0;
  width: 20px;
  border: 1px solid var(--line);
  background: linear-gradient(#dde8f3, #ffffff 30%, #b8cfe5);
  pointer-events: none;
}
.combo-arrow::after {
  content: "";
  position: absolute;
  left: 4px;
  top: 23px;
  border: 5px solid transparent;
  border-top-color: #333333;
  border-bottom: 0;
}

.checks {
  display: flex;
  gap: 12px;
  padding: 10px 0 11px 12px;
  font: 29px/33px "DejaVu Sans", sans-serif;
  white-space: nowrap;
}
.check { position: relative; display: flex; align-items: center; gap: 5px; }
.check input {
  appearance: none;
  width: 13px;
  height: 13px;
  border: 1px solid var(--line);
  background: linear-gradient(#ffffff, #b8cfe5);
}
.check input:checked::after {
  content: "";
  display: block;
  width: 4px;
  height: 7px;
  margin: 1px 0 0 4px;
  border: solid #333333;
  border-width: 0 2px 2px 0;
  transform: rotate(38deg);
}

.params { flex: 1; display: flex; flex-direction: column; padding: 0 3px 1px 4px; }
.inner-body { padding: 3px 4px 8px 1px; }
.params-title { text-align: center; line-height: 51px; padding-bottom: 2px; }
.table-area { flex: 1; border: 1px solid var(--line); box-shadow: 0 1px 0 #ffffff; }
.table { width: 100%; table-layout: fixed; border-collapse: collapse; font-weight: normal; }
.table th {
  height: 47px;
  padding: 0;
  font-weight: normal;
  border-right: 1px solid var(--line);
  border-bottom: 1px solid var(--line);
  box-shadow: inset 1px 1px 0 #ffffff;
}
.table th:last-child { border-right: 0; }
.c-encode { width: 246px; }
.c-equals { width: 296px; }

.actions { display: flex; justify-content: center; gap: 5px; padding-top: 6px; }
.btn {
  height: 53px;
  padding: 0 16px;
  border: 1px solid var(--line);
  background: linear-gradient(#dde8f3, #ffffff 30%, #b8cfe5);
}
.btn:disabled { color: #999999; border-color: #999999; background: none; }
```
